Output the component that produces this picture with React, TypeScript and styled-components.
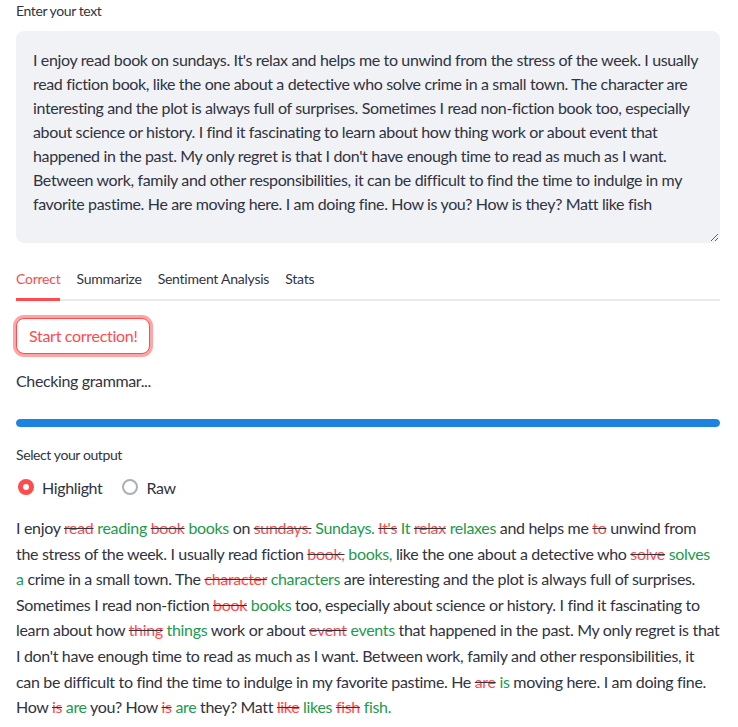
import React, { useState } from "react";
import styled, { createGlobalStyle, css } from "styled-components";

const TEXT = "rgb(49, 51, 63)";
const RED = "#ff4b4b";
const GREEN = "#229a4a";

const GlobalStyle = createGlobalStyle`
  html, body { margin: 0; padding: 0; background: #ffffff; }
  body {
    font-family: "Lato", "Noto Sans", sans-serif;
    color: ${TEXT};
    -webkit-font-smoothing: antialiased;
  }
  * { box-sizing: border-box; }
`;

const Main = styled.main`
  width: 704px;
  margin-left: 16px;
  display: flex;
  flex-direction: column;
`;

const Label = styled.label<{ $top?: number }>`
  display: block;
  font-size: 14px;
  line-height: 22px;
  letter-spacing: -0.4px;
  margin-top: ${(p) => p.$top ?? 0}px;
`;

const TextArea = styled.textarea`
  display: block;
  width: 100%;
  height: 212px;
  margin-top: 9px;
  padding: 16px;
  border: 1px solid rgb(240, 242, 246);
  border-radius: 8px;
  background: rgb(240, 242, 246);
  color: ${TEXT};
  font-family: inherit;
  font-size: 16px;
  line-height: 24px;
  letter-spacing: -0.36px;
  resize: vertical;
  outline: none;
`;

const TabList = styled.div`
  display: flex;
  gap: 16px;
  margin-top: 16px;
  border-bottom: 2px solid rgba(49, 51, 63, 0.1);
`;

const Tab = styled.button<{ $active?: boolean }>`
  height: 42px;
  margin-bottom: -2px;
  padding: 0;
  border: none;
  border-bottom: 3px solid transparent;
  background: none;
  font-family: inherit;
  font-size: 14px;
  letter-spacing: -0.24px;
  color: ${TEXT};
  cursor: pointer;
  ${(p) =>
    p.$active &&
    css`
      color: ${RED};
      border-bottom-color: ${RED};
    `}
`;

const Button = styled.button`
  align-self: flex-start;
  height: 36px;
  margin-top: 17px;
  padding: 0 12px 2px;
  border: 1px solid ${RED};
  border-radius: 8px;
  background: #ffffff;
  color: ${RED};
  font-family: inherit;
  font-size: 16px;
  letter-spacing: -0.3px;
  box-shadow: 0 0 0 3px rgba(255, 75, 75, 0.5);
  cursor: pointer;
`;

const Status = styled.p`
  margin: 14px 0 0;
  font-size: 16px;
  line-height: 26px;
  letter-spacing: -0.36px;
`;

const ProgressTrack = styled.div`
  margin-top: 25px;
  height: 8px;
  border-radius: 4px;
  background: rgb(240, 242, 246);
  overflow: hidden;
`;

const ProgressFill = styled.div`
  height: 100%;
  border-radius: 4px;
  background: #1c83e1;
`;

const RadioGroup = styled.div`
  display: flex;
  align-items: center;
  gap: 20px;
  margin-top: 9px;
  height: 24px;
  padding-left: 2px;
`;

const RadioOption = styled.label`
  display: flex;
  align-items: center;
  gap: 8px;
  font-size: 16px;
  letter-spacing: -0.36px;
  cursor: pointer;
`;

const RadioDot = styled.span<{ $checked: boolean }>`
  width: 16px;
  height: 16px;
  border-radius: 50%;
  display: flex;
  align-items: center;
  justify-content: center;
  ${(p) =>
    p.$checked
      ? css`
          background: ${RED};
          &::after {
            content: "";
            width: 6px;
            height: 6px;
            border-radius: 50%;
            background: #ffffff;
          }
        `
      : css`
          background: #ffffff;
          border: 2px solid rgb(172, 174, 184);
        `}
`;

const Output = styled.p`
  margin: 16px 0 0;
  font-size: 16px;
  line-height: 25.6px;
  letter-spacing: -0.33px;
`;

const Removed = styled.s`
  text-decoration-color: ${TEXT};
  & > span {
    color: ${RED};
  }
`;

const Added = styled.span`
  color: ${GREEN};
`;

type Edit = { del: string; ins: string };
type Token = string | Edit;

const INPUT =
  "I enjoy read book on sundays. It's relax and helps me to unwind from the stress of the week. I usually read fiction book, like the one about a detective who solve crime in a small town. The character are interesting and the plot is always full of surprises. Sometimes I read non-fiction book too, especially about science or history. I find it fascinating to learn about how thing work or about event that happened in the past. My only regret is that I don't have enough time to read as much as I want. Between work, family and other responsibilities, it can be difficult to find the time to indulge in my favorite pastime. He are moving here. I am doing fine. How is you? How is they? Matt like fish";

const TOKENS: Token[] = [
  "I enjoy ",
  { del: "read", ins: "reading" },
  " ",
  { del: "book", ins: "books" },
  " on ",
  { del: "sundays.", ins: "Sundays." },
  " ",
  { del: "It's", ins: "It" },
  " ",
  { del: "relax", ins: "relaxes" },
  " and helps me ",
  { del: "to", ins: "" },
  " unwind from the stress of the week. I usually read fiction ",
  { del: "book,", ins: "books," },
  " like the one about a detective who ",
  { del: "solve", ins: "solves a" },
  " crime in a small town. The ",
  { del: "character", ins: "characters" },
  " are interesting and the plot is always full of surprises. Sometimes I read non-fiction ",
  { del: "book", ins: "books" },
  " too, especially about science or history. I find it fascinating to learn about how ",
  { del: "thing", ins: "things" },
  " work or about ",
  { del: "event", ins: "events" },
  " that happened in the past. My only regret is that I don't have enough time to read as much as I want. Between work, family and other responsibilities, it can be difficult to find the time to indulge in my favorite pastime. He ",
  { del: "are", ins: "is" },
  " moving here. I am doing fine. How ",
  { del: "is", ins: "are" },
  " you? How ",
  { del: "is", ins: "are" },
  " they? Matt ",
  { del: "like", ins: "likes" },
  " ",
  { del: "fish", ins: "fish." },
];

const TABS = ["Correct", "Summarize", "Sentiment Analysis", "Stats"];

export default function App() {
  const [tab, setTab] = useState(0);
  const [mode, setMode] = useState<"Highlight" | "Raw">("Highlight");

  return (
    <>
      <GlobalStyle />
      <Main>
        <Label>Enter your text</Label>
        <TextArea defaultValue={INPUT} spellCheck />
        <TabList>
          {TABS.map((t, i) => (
            <Tab key={t} $active={i === tab} onClick={() => setTab(i)}>
              {t}
            </Tab>
          ))}
        </TabList>
        <Button>Start correction!</Button>
        <Status>Checking grammar...</Status>
        <ProgressTrack>
          <ProgressFill style={{ width: "100%" }} />
        </ProgressTrack>
        <Label $top={17}>Select your output</Label>
        <RadioGroup>
          {(["Highlight", "Raw"] as const).map((m) => (
            <RadioOption key={m} onClick={() => setMode(m)}>
              <RadioDot $checked={mode === m} />
              {m}
            </RadioOption>
          ))}
        </RadioGroup>
        <Output>
          {TOKENS.map((tk, i) =>
            typeof tk === "string" ? (
              <React.Fragment key={i}>{tk}</React.Fragment>
            ) : (
              <React.Fragment key={i}>
                <Removed>
                  <span>{tk.del}</span>
                </Removed>
                {tk.ins && (
                  <>
                    {" "}
                    <Added>{tk.ins}</Added>
                  </>
                )}
              </React.Fragment>
            )
          )}
        </Output>
      </Main>
    </>
  );
}
